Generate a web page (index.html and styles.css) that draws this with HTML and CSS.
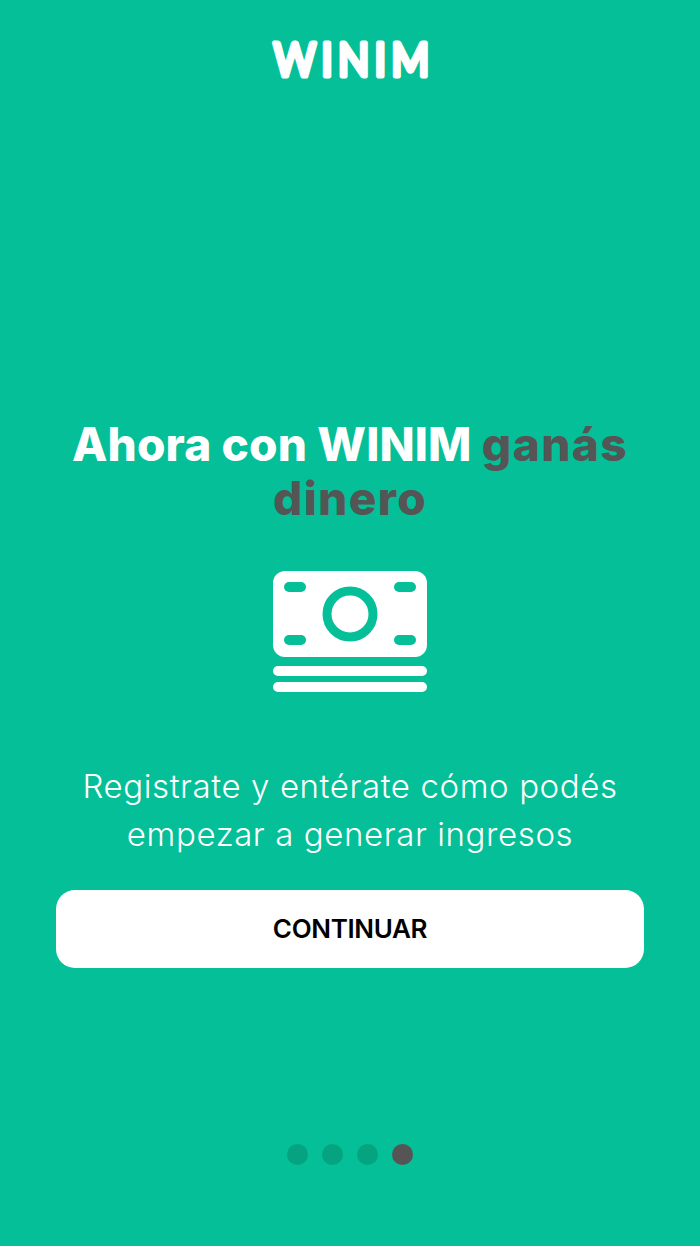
FILE: index.html
```html
<!DOCTYPE html>
<html lang="es">
<head>
    <meta charset="UTF-8">
    <meta name="viewport" content="width=device-width, initial-scale=1.0">
    <title>Winim</title>
    <link rel="stylesheet" href="styles.css">
</head>
<body>
    <div class="screen">
        <div class="header">
            <svg class="logo" width="190" height="50" viewBox="0 0 190 50">
                <text class="logo-text" x="18.5" y="42" textLength="161" lengthAdjust="spacingAndGlyphs">WINIM</text>
            </svg>
        </div>
        <div class="content">
            <h1>Ahora con WINIM <span class="dark">ganás dinero</span></h1>
            <svg class="money" width="154" height="122" viewBox="0 0 154 122">
                <rect x="0" y="0" width="154" height="86" rx="12" fill="#fff"/>
                <rect x="11" y="11" width="22" height="10" rx="5" fill="#04bf97"/>
                <rect x="121" y="11" width="22" height="10" rx="5" fill="#04bf97"/>
                <rect x="11" y="64" width="22" height="10" rx="5" fill="#04bf97"/>
                <rect x="121" y="64" width="22" height="10" rx="5" fill="#04bf97"/>
                <circle cx="77" cy="43" r="23" fill="none" stroke="#04bf97" stroke-width="9"/>
                <rect x="0" y="95" width="154" height="10" rx="5" fill="#fff"/>
                <rect x="0" y="111" width="154" height="10" rx="5" fill="#fff"/>
            </svg>
            <p class="sub">Registrate y entérate cómo podés<br>empezar a generar ingresos</p>
            <a class="btn" href="#">CONTINUAR</a>
        </div>
        <div class="dots">
            <span class="dot"></span>
            <span class="dot"></span>
            <span class="dot"></span>
            <span class="dot active"></span>
        </div>
    </div>
</body>
</html>
```
FILE: styles.css
```css
* {
    margin: 0;
    padding: 0;
    box-sizing: border-box;
    font-family: 'Inter', 'Liberation Sans', sans-serif;
}
body {
    background-color: #04bf97;
    color: #fff;
}
.screen {
    height: 1246px;
    display: flex;
    flex-direction: column;
    align-items: center;
    overflow: hidden;
}
.header {
    height: 85px;
    padding-top: 34px;
}
.logo {
    display: block;
}
.logo-text {
    font-family: 'Lato', sans-serif;
    font-size: 46px;
    font-weight: 400;
    letter-spacing: 6px;
    fill: #fff;
    stroke: #fff;
    stroke-width: 5;
    stroke-linejoin: round;
    stroke-linecap: round;
}
.content {
    width: 100%;
    padding: 332px 56px 0;
    display: flex;
    flex-direction: column;
    align-items: center;
}
h1 {
    width: 588px;
    font-size: 46px;
    line-height: 54px;
    font-weight: 800;
    letter-spacing: 0.15px;
    text-align: center;
}
.dark {
    color: #555555;
    letter-spacing: 1.4px;
}
.money {
    display: block;
    margin-top: 46px;
}
.sub {
    margin-top: 69px;
    font-size: 33px;
    font-weight: 300;
    letter-spacing: 0.6px;
    line-height: 48px;
    text-align: center;
    white-space: nowrap;
}
.btn {
    display: block;
    width: 588px;
    height: 78px;
    margin-top: 32px;
    background-color: #fff;
    border-radius: 19px;
    color: #000;
    font-size: 26px;
    font-weight: 600;
    line-height: 78px;
    text-align: center;
    text-decoration: none;
    letter-spacing: -0.35px;
}
.dots {
    margin-top: 176px;
    display: flex;
    gap: 14px;
}
.dot {
    width: 21px;
    height: 21px;
    border-radius: 50%;
    background-color: #06a381;
}
.dot.active {
    background-color: #555555;
}
```
